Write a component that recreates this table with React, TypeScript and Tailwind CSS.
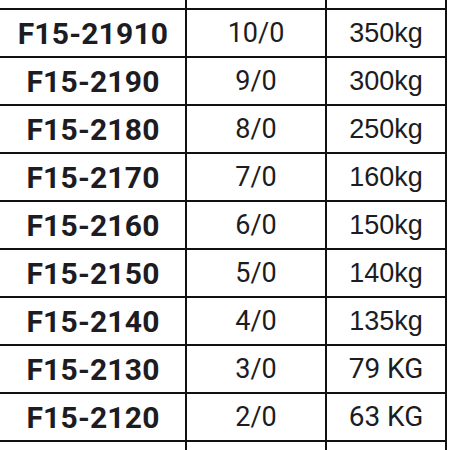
const ROWS = [
  { code: "F15-21910", size: "10/0", load: "350kg" },
  { code: "F15-2190", size: "9/0", load: "300kg" },
  { code: "F15-2180", size: "8/0", load: "250kg" },
  { code: "F15-2170", size: "7/0", load: "160kg" },
  { code: "F15-2160", size: "6/0", load: "150kg" },
  { code: "F15-2150", size: "5/0", load: "140kg" },
  { code: "F15-2140", size: "4/0", load: "135kg" },
  { code: "F15-2130", size: "3/0", load: "79 KG" },
  { code: "F15-2120", size: "2/0", load: "63 KG" },
]

function Cell({
  children,
  className = "",
}: {
  children?: React.ReactNode
  className?: string
}) {
  return (
    <div
      className={`flex h-[48px] items-center justify-center border-b-2 border-r-2 border-[#111] ${className}`}
    >
      {children}
    </div>
  )
}

export default function App() {
  return (
    <div className="h-[450px] w-[450px] overflow-hidden bg-white text-[#1c1c22]">
      <div className="-mt-[38px] grid w-[447px] grid-cols-[187px_140px_120px]">
        {/* header row sits mostly above the crop */}
        <Cell />
        <Cell />
        <Cell />

        {ROWS.map((r) => {
          const upper = r.load.includes("KG")
          return (
            <div key={r.code} className="contents">
              <Cell className="pl-[1px] font-['Roboto',sans-serif] text-[30px] font-bold tracking-[0.2px]">
                {r.code}
              </Cell>
              <Cell className="font-['Roboto',sans-serif] text-[27px]">{r.size}</Cell>
              <Cell
                className={
                  upper
                    ? "font-['Roboto',sans-serif] text-[28px]"
                    : "font-['Liberation_Sans',Arial,sans-serif] text-[27px]"
                }
              >
                {r.load}
              </Cell>
            </div>
          )
        })}

        <Cell />
        <Cell />
        <Cell />
      </div>
    </div>
  )
}
